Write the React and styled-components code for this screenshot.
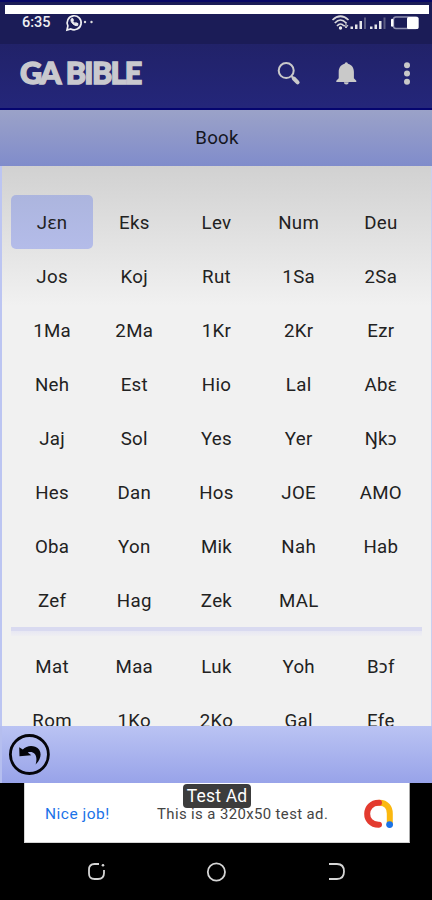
import React from 'react';
import styled, { createGlobalStyle } from 'styled-components';

const GlobalStyle = createGlobalStyle`
  * { box-sizing: border-box; }
  body { margin: 0; background: #000; }
`;

const Screen = styled.div`
  width: 432px;
  height: 900px;
  display: flex;
  flex-direction: column;
  overflow: hidden;
  background: #000;
  font-family: Roboto, "Noto Sans", sans-serif;
`;

const StatusBar = styled.div`
  height: 44px;
  flex: none;
  background: #1b1c57;
  border-top: 2px solid #080866;
  padding-top: 3px;
`;

const TopStrip = styled.div`
  height: 9px;
  margin: 0 3px 0 5px;
  background: #fff;
`;

const StatusRow = styled.div`
  height: 17px;
  display: flex;
  align-items: center;
  padding: 0 12px 0 22px;
  color: #eeeef2;
  font-size: 14.5px;
  font-weight: 500;
`;

const Clock = styled.span`
  width: 43px;
`;

const Spacer = styled.div`
  flex: 1;
`;

const Icon = styled.svg`
  display: block;
  flex: none;
  overflow: visible;
`;

const AppBar = styled.header`
  height: 66px;
  flex: none;
  display: flex;
  align-items: center;
  padding: 0 19px 7px 20px;
  background: linear-gradient(#212269, #24267a);
  border-bottom: 2px solid #05056f;
`;

const Title = styled.h1`
  margin: 0;
  flex: 1;
  padding-bottom: 2px;
  font-family: Lato, sans-serif;
  font-size: 30.5px;
  line-height: 36px;
  font-weight: 900;
  letter-spacing: -1.7px;
  word-spacing: 1.5px;
  color: #c9c9ce;
  -webkit-text-stroke: 1.4px #c9c9ce;
`;

const Actions = styled.div`
  display: flex;
  gap: 33px;
`;

const MoreSlot = styled.div`
  width: 22px;
  padding-left: 10px;
`;

const Body = styled.main`
  height: 616px;
  flex: none;
  display: flex;
  flex-direction: column;
  border-left: 2px solid #bcc5f2;
  border-right: 1px solid #c9cff0;
  background: #f1f1f1;
`;

const SectionHeader = styled.div`
  height: 56px;
  flex: none;
  margin: 0 -1px 0 -2px;
  display: flex;
  align-items: center;
  justify-content: center;
  padding: 0 0 1px 2px;
  background: linear-gradient(#9ba2c8, #808ccb);
  color: #15161f;
  font-size: 18.7px;
  letter-spacing: 0.25px;
`;

const Books = styled.div`
  flex: 1;
  overflow: hidden;
  padding: 29px 9px 0;
  background: linear-gradient(#d1d1d1, #f1f1f1 140px);
`;

const BookGrid = styled.div`
  display: grid;
  grid-template-columns: repeat(5, 1fr);
  grid-auto-rows: 54px;
`;

const Book = styled.div`
  display: flex;
  align-items: center;
  justify-content: center;
  padding-top: 1px;
  border-radius: 5px;
  background: ${(p) => (p.$active ? 'linear-gradient(#acb5de, #b4bce9)' : 'transparent')};
  color: #222;
  font-size: 18.7px;
  line-height: 22px;
  letter-spacing: 0.3px;
`;

const Divider = styled.div`
  height: 9px;
  margin-bottom: 3px;
  background: linear-gradient(#d9daf0 50%, #e8e8f3 50%, #efeff2);
`;

const Footer = styled.div`
  height: 57px;
  flex: none;
  display: flex;
  align-items: center;
  padding-left: 7px;
  background: linear-gradient(#bac3f3, #98a3e9);
  border-left: 2px solid #b5beef;
`;

const AdBanner = styled.div`
  position: relative;
  width: 386px;
  height: 60px;
  flex: none;
  margin-left: 24px;
  display: flex;
  align-items: center;
  padding: 2px 15px 0 20px;
  background: #fff;
  border: 1px solid #d5d5d5;
  border-top: 0;
  border-right: 1px solid #aaa;
  font-size: 15.5px;
  color: #444;
`;

const AdHeadline = styled.span`
  width: 112px;
  color: #1a73e8;
  white-space: nowrap;
  letter-spacing: 0.5px;
`;

const AdText = styled.span`
  flex: 1;
  white-space: nowrap;
  letter-spacing: 0.4px;
  font-size: 14.9px;
`;

const AdLabel = styled.span`
  position: absolute;
  top: 1px;
  left: 158px;
  width: 68px;
  height: 24px;
  border-radius: 4px;
  background: #3c3c3c;
  color: #fff;
  font-size: 17.5px;
  line-height: 25px;
  text-align: center;
  letter-spacing: 0.2px;
`;

const NavBar = styled.nav`
  height: 57px;
  flex: none;
  display: flex;
  align-items: center;
  justify-content: space-between;
  padding: 0 87px 0 87px;
`;

const OLD = ['Jɛn', 'Eks', 'Lev', 'Num', 'Deu', 'Jos', 'Koj', 'Rut', '1Sa', '2Sa',
  '1Ma', '2Ma', '1Kr', '2Kr', 'Ezr', 'Neh', 'Est', 'Hio', 'Lal', 'Abɛ',
  'Jaj', 'Sol', 'Yes', 'Yer', 'Ŋkɔ', 'Hes', 'Dan', 'Hos', 'JOE', 'AMO',
  'Oba', 'Yon', 'Mik', 'Nah', 'Hab', 'Zef', 'Hag', 'Zek', 'MAL'];
const NEW = ['Mat', 'Maa', 'Luk', 'Yoh', 'Bɔf', 'Rom', '1Ko', '2Ko', 'Gal', 'Efe'];

const ChatIcon = () => (
  <Icon width="30" height="18" viewBox="0 0 30 18" fill="none">
    <path d="M2 16 L2.9 11.9 A7 7 0 1 1 5.8 14.9 Z" stroke="#eeeef2" strokeWidth="1.7" />
    <path d="M6 5.2 C5.4 8.4 9 12 12.6 11.6 L13 9.6 L10.8 8.7 L9.9 9.4 L7.8 7.2 L8.5 6.2 L7.6 4.3Z" fill="#eeeef2" stroke="#eeeef2" />
    <circle cx="20" cy="8" r="1.2" fill="#ddd" />
    <circle cx="26.5" cy="8" r="1.2" fill="#ddd" />
  </Icon>
);

const StatusIcons = () => (
  <Icon width="88" height="17" viewBox="332 13 88 17" fill="none">
    <g stroke="#d9d9dc" strokeWidth="1.7">
      <path d="M332.5 19 Q340.5 11.5 348.5 19" />
      <path d="M334.8 22 Q340.5 16 346.2 22" />
      <path d="M337 25 Q340.5 21 344 25" />
    </g>
    <circle cx="340.5" cy="27" r="1.7" fill="#eee" />
    <path d="M346 21v5M344 24l2 3 2-3" stroke="#ddd" />
    <g fill="#e6e6e9">
      <path d="M350.5 25.5h2.5v2.5h-2.5zM355 23.5h2.5v4.5H355zM359.5 20h2.5v8h-2.5z" />
      <path d="M370 25.5h2.5v2.5H370zM374.5 23.5h2.5v4.5h-2.5zM379 20h2.5v8H379z" />
      <path d="M364 16.5h2V28h-2zM383.5 16.5h2V28h-2z" fill="#5c5d83" />
    </g>
    <rect x="393.5" y="16" width="24.5" height="11.5" rx="2.5" stroke="#8f90b0" strokeWidth="1.4" />
    <path d="M392.2 19v5.5" stroke="#fff" strokeWidth="2.4" strokeLinecap="round" />
    <rect x="407" y="16" width="11.5" height="12" rx="1.5" fill="#fff" />
  </Icon>
);

const SearchIcon = () => (
  <Icon width="24" height="24" viewBox="277 60 24 24" fill="none" stroke="#c9c9ca">
    <circle cx="286.2" cy="69.6" r="7.5" strokeWidth="2" />
    <path d="M291.5 75.2l2.4 2.3" strokeWidth="2" />
    <path d="M293.8 77.5l3.8 3.8" strokeWidth="4" strokeLinecap="round" />
  </Icon>
);

const BellIcon = () => (
  <Icon width="24" height="24" viewBox="334 60 24 24" fill="#c9c9c9">
    <path d="M344.7 62.8a1.6 1.6 0 0 1 3.2 0c4.2 1.1 6 4.4 6 8.2v6.3l2.4 2.4v1.2h-20v-1.2l2.4-2.4V71c0-3.8 1.8-7.1 6-8.2z" />
    <path d="M343.9 81.2h4.8a2.4 2.4 0 0 1-4.8 0z" />
  </Icon>
);

const MoreIcon = () => (
  <Icon width="12" height="24" viewBox="401 60 12 24" fill="#c9c9c9">
    <circle cx="407" cy="64.3" r="3" />
    <circle cx="407" cy="72.6" r="3" />
    <circle cx="407" cy="80.8" r="3" />
  </Icon>
);

const BackIcon = () => (
  <Icon width="41" height="41" viewBox="9 735 41 41">
    <circle cx="29.4" cy="755.5" r="19" fill="none" stroke="#05050a" strokeWidth="2.8" />
    <path d="M19.2 748.2L19.5 757.2L31.3 756.3L27.8 753.4C33 751.6 38.6 755.3 35.6 765.5C42.5 758.5 42.1 750.7 35.2 747.8C30.6 745.9 26 747.4 22.8 750.5Z" fill="#05050a" />
  </Icon>
);

const AdLogo = () => (
  <Icon width="30" height="30" viewBox="364 798 30 30" fill="none" strokeWidth="6" strokeLinecap="round">
    <path d="M379.5 801.7C386.5 801.7 389.8 806.7 389.8 812.5V823" stroke="#fbb80f" />
    <path d="M379 801.8C363.5 801.5 363 824.2 379 823.7" stroke="#e33b2f" />
    <circle cx="389.6" cy="823.6" r="3.4" fill="#1a73e8" />
  </Icon>
);

const RecentIcon = () => (
  <Icon width="19" height="19" viewBox="0 0 19 19" fill="none" stroke="#d5d5d5" strokeWidth="1.8">
    <path d="M12 2H7.5Q2 2 2 7.5V11.5Q2 17 7.5 17H11Q17 17 17 11V8" />
    <circle cx="16" cy="3.3" r="1.3" fill="#d5d5d5" stroke="none" />
  </Icon>
);

const HomeIcon = () => (
  <Icon width="20" height="20" viewBox="0 0 20 20" fill="none" stroke="#d5d5d5" strokeWidth="1.8">
    <circle cx="9.4" cy="10" r="8.6" />
  </Icon>
);

const BackNavIcon = () => (
  <Icon width="17" height="19" viewBox="0 0 17 19" fill="none" stroke="#d5d5d5" strokeWidth="1.8">
    <path d="M1 2H9Q16 2 16 9.5T9 17H1" />
  </Icon>
);

export default function App() {
  return (
    <Screen>
      <GlobalStyle />
      <StatusBar>
        <TopStrip />
        <StatusRow>
          <Clock>6:35</Clock>
          <ChatIcon />
          <Spacer />
          <StatusIcons />
        </StatusRow>
      </StatusBar>
      <AppBar>
        <Title>GA BIBLE</Title>
        <Actions>
          <SearchIcon />
          <BellIcon />
          <MoreSlot><MoreIcon /></MoreSlot>
        </Actions>
      </AppBar>
      <Body>
        <SectionHeader>Book</SectionHeader>
        <Books>
          <BookGrid>
            {OLD.map((name, i) => <Book key={name} $active={i === 0}>{name}</Book>)}
          </BookGrid>
          <Divider />
          <BookGrid>
            {NEW.map((name) => <Book key={name}>{name}</Book>)}
          </BookGrid>
        </Books>
      </Body>
      <Footer><BackIcon /></Footer>
      <AdBanner>
        <AdHeadline>Nice job!</AdHeadline>
        <AdText>This is a 320x50 test ad.</AdText>
        <AdLogo />
        <AdLabel>Test Ad</AdLabel>
      </AdBanner>
      <NavBar>
        <RecentIcon />
        <HomeIcon />
        <BackNavIcon />
      </NavBar>
    </Screen>
  );
}
